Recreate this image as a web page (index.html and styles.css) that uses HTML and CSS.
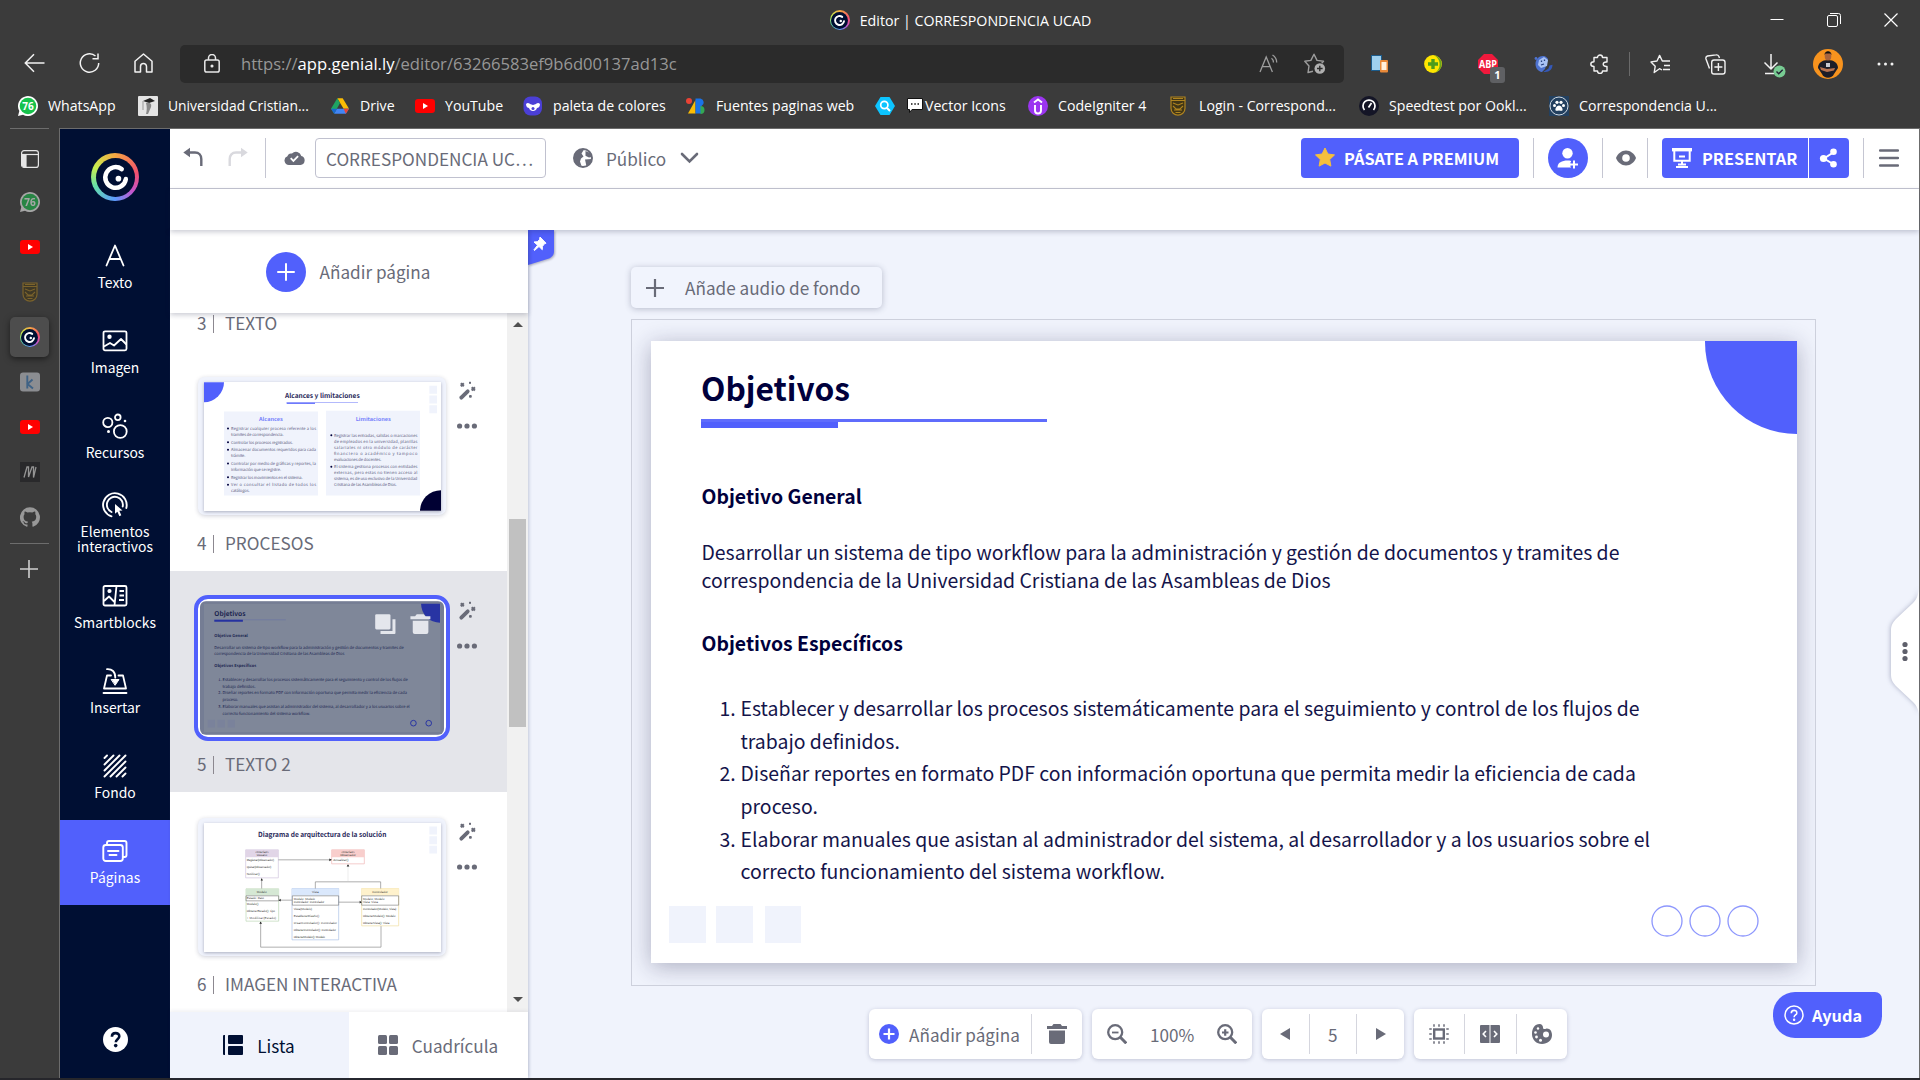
FILE: index.html
```html
<!DOCTYPE html>
<html lang="es">
<head>
<meta charset="utf-8">
<title>Editor | CORRESPONDENCIA UCAD</title>
<link rel="stylesheet" href="styles.css">
</head>
<body>
<svg class="defs" width="0" height="0" aria-hidden="true">
  <defs>
    <symbol id="i-wa" viewBox="0 0 20 20"><path d="M0 20l1.300-5A10 10 0 1 1 5 18.700z" fill="#fff"/><circle cx="10" cy="10" r="8.300" fill="#17c24c"/><text x="10" y="13.600" font-size="10" font-weight="700" fill="#fff" text-anchor="middle" class="fu">76</text></symbol>
    <symbol id="i-yt" viewBox="0 0 20 14"><rect width="20" height="14" rx="3.200" fill="#f00"/><path d="M8 4l5 3-5 3z" fill="#fff"/></symbol>
    <symbol id="i-shield" viewBox="0 0 16 20"><path d="M1 1h14v11.300c0 4-3.300 6.900-7 6.900S1 16.300 1 12.300z" fill="#413616" stroke="#b08420" stroke-width="1.200"/><path d="M1 4.500h14M3 2.500h10M3 7l5 2 5-2M3 10l3 3h4l3-3M4 14h8M5.500 16.500h5" stroke="#b08420" stroke-width="1.100" fill="none"/></symbol>
    <symbol id="i-logo-g" viewBox="0 0 20 20"><path d="M13.200 5.700A5.300 5.300 0 1 0 15.300 10.800" fill="none" stroke="#fff" stroke-width="2.300" stroke-linecap="round"/><circle cx="11.500" cy="10.600" r="1.450" fill="#fff"/></symbol>
    <symbol id="i-wand" viewBox="0 0 20 20"><path d="M3.300 16.700l6.400-6.400" stroke="#696b78" stroke-width="3.800" stroke-linecap="round"/><path d="M2.800 2.300l3 3m0-3l-3 3M13.700 6.300l3.200 3.200m0-3.200l-3.200 3.200" stroke="#696b78" stroke-width="2"/><rect x="11" y=".8" width="2" height="2" fill="#696b78"/><rect x="11" y="14" width="2.800" height="2.800" rx="1" fill="#696b78"/></symbol>
    <symbol id="i-dots" viewBox="0 0 20 6"><g fill="#696b78"><circle cx="2.600" cy="3" r="2.600"/><circle cx="10" cy="3" r="2.600"/><circle cx="17.400" cy="3" r="2.600"/></g></symbol>
  </defs>
</svg>

<header class="titlebar">
  <div class="wtitle"><span class="glogo g20"><svg viewBox="0 0 20 20"><use href="#i-logo-g"/></svg></span><span>Editor | CORRESPONDENCIA UCAD</span></div>
  <div class="wbtns">
    <svg width="14" height="14"><path d="M.500 6.500h13" stroke="#fff"/></svg>
    <svg width="14" height="14" fill="none" stroke="#fff"><rect x=".500" y="2.500" width="10" height="11" rx="1.500"/><path d="M3 .500h8.500a2 2 0 0 1 2 2V11"/></svg>
    <svg width="14" height="14"><path d="M.500.500l13 13M13.500.500l-13 13" stroke="#fff" stroke-width="1.200"/></svg>
  </div>
</header>

<div class="navrow">
  <div class="navbtns">
    <svg width="21" height="20" fill="none" stroke="#f2f2f2" stroke-width="1.500"><path d="M20.500 10H1.500M10 1.200L1.300 10 10 18.800"/></svg>
    <svg width="21" height="20" fill="none" stroke="#f2f2f2" stroke-width="1.500"><path d="M19.700 10a9.200 9.200 0 1 1-3.200-7M19 .500v5.300h-5.500"/></svg>
    <svg width="19" height="20" fill="none" stroke="#f2f2f2" stroke-width="1.500" stroke-linejoin="round"><path d="M1 8.200L9.500 1 18 8.200V19h-5.500v-5.500a3 3 0 0 0-6 0V19H1z"/></svg>
  </div>
  <div class="urlbar">
    <svg class="lock" width="16" height="19" fill="none" stroke="#e8e8e8" stroke-width="1.500"><rect x=".8" y="6" width="14.400" height="12" rx="1.800"/><path d="M4.500 6V4a3.500 3.500 0 0 1 7 0v2"/><circle cx="8" cy="12" r=".8" fill="#fff"/></svg>
    <span class="url">https://<b>app.genial.ly</b>/editor/63266583ef9b6d00137ad13c</span>
    <svg class="aloud" width="22" height="19" fill="none" stroke="#9d9d9d" stroke-width="1.300"><path d="M1 18L7.200 3l6.200 15M3.300 12.700h8M12.500 4.200c1.300 1 2 2.600 2 4.300M13.500 1c2.600 1.600 4.200 4.400 4.200 7.500"/></svg>
    <svg width="22" height="21" fill="none" stroke="#9d9d9d" stroke-width="1.400" stroke-linejoin="round"><path d="M9 18.300L4 19.500l1-6.500L.8 8.300l6.100-.9L10 1.200l3 6.200 6.500.9-1.800 2"/><circle cx="15.800" cy="15.500" r="5.300" fill="#b0b0b0" stroke="none"/><path d="M15.800 12.700v5.600M13 15.500h5.600" stroke="#2b2b2b"/></svg>
  </div>
  <div class="exts">
    <svg width="18" height="18"><rect x=".500" y=".500" width="10" height="15" fill="#9fd0ee" stroke="#1c5c8c"/><rect x="9" y="5" width="8" height="12.500" rx="1" fill="#e98a3a"/><rect x="10.500" y="7" width="5" height="8" fill="#fff0dd"/></svg>
    <svg width="18" height="18"><circle cx="9" cy="9" r="8.900" fill="#ffe600"/><path d="M10 .300A8.900 8.900 0 0 1 11 17.700 10 10 0 0 0 10 .300z" fill="#6aa51d"/><path d="M9 4v10M4 9h10" stroke="#4c9c1c" stroke-width="3.400"/></svg>
    <div class="abp"><svg width="20" height="20"><path d="M6 0h8l6 6v8l-6 6H6l-6-6V6z" fill="#f0193c"/><text x="10" y="13.800" font-size="10" font-weight="700" fill="#fff" text-anchor="middle" textLength="18" lengthAdjust="spacingAndGlyphs" class="fu">ABP</text></svg><span class="badge">1</span></div>
    <svg width="19" height="18"><circle cx="2" cy="3.500" r="1.400" fill="#4d72cf"/><path d="M1.500 9c0-5 4-8.500 8-8 2 .2 3.500 1.500 4.500 3l-3 10-3 3C4 16.500 1.500 13 1.500 9z" fill="#4d72cf"/><path d="M5 5l5-3 4 3-1 6-6 2-3-3z" fill="#a9c2f5"/><path d="M7.500 5.500v1.500M10.500 4.500V6M7 10l3-1" stroke="#26407f" stroke-width="1.300"/><path d="M9.500 16.800c5 1 9-2 9-7l-3 .7-1 3z" fill="#3458b8"/></svg>
    <svg width="19" height="20" fill="none" stroke="#f2f2f2" stroke-width="1.400" stroke-linejoin="round"><path d="M4 3.500h3.500a2.500 2.500 0 0 1 5 0H17v4.500c-3-.300-3.800 1.200-3.800 2.300S14.500 12.800 17 12.500V17h-4.500a2.500 2.500 0 0 1-5 0H4v-4.500C1.800 12.500.8 11.400.8 10S1.800 7.700 4 7.700z"/></svg>
    <i class="vline"></i>
    <svg width="21" height="20" fill="none" stroke="#f2f2f2" stroke-width="1.400" stroke-linejoin="round"><path d="M12 16l-2.500-1.300L4.200 18.500l1-6.200L1 7.900l6-.900 2.600-5.600L12.300 7h7.700M14 11.500h6M13 15.500h7"/></svg>
    <svg width="21" height="21" fill="none" stroke="#f2f2f2" stroke-width="1.400"><rect x="6.700" y="6" width="13.300" height="14" rx="2.300"/><path d="M13.400 9v8M9.400 13h8M4.500 14.500L1 5a2.500 2.500 0 0 1 1.500-3L11 .900a2.500 2.500 0 0 1 3 2L14.500 4"/></svg>
    <svg width="24" height="24"><path d="M8 0v14M1.500 8.500L8 15l6.500-6.500M2 19.500h9" fill="none" stroke="#f2f2f2" stroke-width="1.500"/><circle cx="16.500" cy="17.500" r="6" fill="#78cc93"/><path d="M13.500 17.500l2.200 2.200 4-4" stroke="#223" stroke-width="1.400" fill="none"/></svg>
    <svg width="30" height="30"><circle cx="15" cy="15" r="15" fill="#f7931e"/><path d="M5 19c0-5 4-8 10-8s10 3 10 8l-4 6c-2 5-10 5-12 0z" fill="#1d1d27"/><ellipse cx="15" cy="7" rx="3.300" ry="4.600" fill="#a8643e"/><path d="M11.500 6c0-5 7-5 7 0l-1-1.500h-5z" fill="#111"/><path d="M7 18l7 2 8-1-1 2.500-7 1.500-6-2z" fill="#b87350"/><path d="M13 14h4v4h-4z" fill="#c9c9cf"/></svg>
    <svg width="17" height="4" fill="#f2f2f2"><circle cx="2" cy="2" r="1.500"/><circle cx="8.500" cy="2" r="1.500"/><circle cx="15" cy="2" r="1.500"/></svg>
  </div>
</div>

<nav class="bookmarks">
  <div><svg width="20" height="20"><use href="#i-wa"/></svg><span>WhatsApp</span></div>
  <div><svg width="20" height="20"><rect width="20" height="20" rx="1" fill="#e4e4e4"/><path d="M5 5l7-3 5 3-6 2z" fill="#222"/><path d="M8 7c4-1 6 1 5 4l-3 7H8c1-4 1-7 0-11z" fill="#888"/><path d="M5 5v9" stroke="#999"/></svg><span class="u2">Universidad Cristian...</span></div>
  <div class="b3"><svg width="18" height="18" viewBox="0 0 20 18"><path d="M7 .500h6L20 12h-6z" fill="#fbbc04"/><path d="M7 .500l3 5.200L3.500 17.500 0 12z" fill="#1fa463"/><path d="M3.500 17.500l3-5.500H20l-3.500 5.500z" fill="#4285f4"/><path d="M0 12h6.500l-3 5.500z" fill="#1967d2"/><path d="M14 12h6l-3.500 5.500z" fill="#ea4335"/></svg><span>Drive</span></div>
  <div><svg width="20" height="14"><use href="#i-yt"/></svg><span>YouTube</span></div>
  <div><svg width="20" height="20"><rect x=".500" y=".500" width="18.500" height="19" rx="7" fill="#4b3fd6"/><path d="M3 8c2-2 4 0 4 0l3 1 3-1s2-2 4 0c0 3-2 4-3 4-1 4-7 4-8 0-1 0-3-1-3-4z" fill="#fff"/><circle cx="10" cy="12.500" r="1.500" fill="#4b3fd6"/></svg><span class="u5">paleta de colores</span></div>
  <div><svg width="20" height="18"><path d="M2 16.500L9.500 3v13.500z" fill="#fbbc04"/><circle cx="3" cy="4" r="3" fill="#ea4335"/><path d="M9.500 1.500h5a4 4 0 0 1 1 7.500v7.500h-6z" fill="#1a73e8"/><path d="M14.500 9a4 4 0 0 1 0 8z" fill="#34a853"/></svg><span>Fuentes paginas web</span></div>
  <div><svg width="20" height="20"><path d="M5.500 1h9L20 10l-5.500 9h-9L0 10z" fill="#0cc4ff" stroke-linejoin="round"/><circle cx="9.300" cy="9" r="3.600" fill="none" stroke="#fff" stroke-width="1.700"/><path d="M12 12l3 3" stroke="#fff" stroke-width="1.900"/></svg><svg class="bubble" width="16" height="15"><path d="M.500.500h15v11H5l-2.500 3v-3h-2z" fill="#fff" stroke="#111"/><path d="M4 6h1.500M7.300 6h1.500M10.500 6H12" stroke="#111" stroke-width="1.500"/></svg><span class="u7">Vector Icons</span></div>
  <div><svg width="20" height="20"><circle cx="10" cy="10" r="10" fill="#9b35f0"/><path d="M7 9v5.500a3 3 0 0 0 6 0V9M6 6.500l4-3 4 3" fill="none" stroke="#fff" stroke-width="1.900"/></svg><span>CodeIgniter 4</span></div>
  <div class="b9"><svg width="16" height="20"><use href="#i-shield"/></svg><span>Login - Correspond...</span></div>
  <div><svg width="20" height="20"><circle cx="10" cy="10" r="10" fill="#141526"/><path d="M5.500 14a6 6 0 1 1 9 0M9.500 11.500L12.500 7" stroke="#fff" stroke-width="1.700" fill="none"/></svg><span>Speedtest por Ookl...</span></div>
  <div><svg width="20" height="20"><rect width="20" height="20" fill="#23405f"/><circle cx="10" cy="10" r="9" fill="#23405f" stroke="#cfd8e2"/><g fill="#fff"><path d="M10 9.500c2.200 0 4 3 3.500 4.700-.6 1.300-2.200.3-3.500.3s-2.900 1-3.500-.3C6 12.500 7.800 9.500 10 9.500z"/><circle cx="5.500" cy="9.500" r="1.500"/><circle cx="8" cy="6.300" r="1.600"/><circle cx="12" cy="6.300" r="1.600"/><circle cx="14.500" cy="9.500" r="1.500"/></g></svg><span>Correspondencia U...</span></div>
</nav>

<div class="main">
  <aside class="vtabs">
    <i class="hr"></i>
    <div class="vt first"><svg width="18" height="18" fill="none" stroke="#e6e6e6" stroke-width="1.200"><rect x=".600" y=".600" width="16.800" height="16.800" rx="2.500"/><path d="M1 4.500h16"/><path d="M1 4.500h4V17H3L1 15z" fill="#e6e6e6"/></svg></div>
    <div class="vt dim"><svg width="20" height="20"><use href="#i-wa"/></svg></div>
    <div class="vt"><svg width="20" height="14"><use href="#i-yt"/></svg></div>
    <div class="vt dim"><svg width="16" height="20"><use href="#i-shield"/></svg></div>
    <div class="vt on"><span class="glogo g20"><svg viewBox="0 0 20 20"><use href="#i-logo-g"/></svg></span></div>
    <div class="vt"><svg width="20" height="20"><rect y=".500" width="20" height="19" rx="3" fill="#8b8d91"/><path d="M7.300 3.500v13M12.500 7.500l-5 4.500 5.500 4.500" stroke="#3f6285" stroke-width="1.900" fill="none"/></svg></div>
    <div class="vt"><svg width="20" height="14"><use href="#i-yt"/></svg></div>
    <div class="vt"><svg width="20" height="20"><rect width="20" height="20" fill="#29292b"/><path d="M4 15.500L7 5l1.500 0v10L12 5h1.500v10.500L16 5" stroke="#949494" stroke-width="1.300" fill="none"/></svg></div>
    <div class="vt"><svg width="20" height="20"><path d="M10 .3a10 10 0 0 0-3.200 19.500c.5.100.7-.2.700-.5v-1.900c-2.800.6-3.400-1.200-3.400-1.200-.4-1.100-1.100-1.400-1.100-1.400-.9-.6.100-.6.100-.6 1 .1 1.500 1 1.500 1 .9 1.500 2.300 1.100 2.900.8.100-.6.400-1.100.6-1.300-2.200-.3-4.500-1.100-4.500-4.900 0-1.100.4-2 1-2.700-.1-.2-.4-1.300.1-2.600 0 0 .8-.3 2.700 1a9.500 9.500 0 0 1 5 0c1.900-1.300 2.700-1 2.700-1 .5 1.300.2 2.400.1 2.600.6.700 1 1.600 1 2.700 0 3.800-2.300 4.600-4.500 4.900.4.300.7.900.7 1.800v2.800c0 .3.200.6.700.5A10 10 0 0 0 10 .3z" fill="#989898"/></svg></div>
    <i class="hr h2"></i>
    <div class="vt plus"><svg width="18" height="18"><path d="M9 0v18M0 9h18" stroke="#d0d0d0" stroke-width="1.600"/></svg></div>
  </aside>

  <div class="app">
    <aside class="side">
      <div class="biglogo"><span class="glogo g48"><svg viewBox="0 0 20 20"><use href="#i-logo-g"/></svg></span></div>
      <div class="si"><svg width="26" height="26" fill="none" stroke="#fff" stroke-width="1.800" stroke-linecap="round" stroke-linejoin="round"><path d="M4.500 22.500L13 2.500l8.500 20M7.500 16h11"/></svg><span>Texto</span></div>
      <div class="si"><svg width="26" height="26" fill="none" stroke="#fff" stroke-width="1.800" stroke-linejoin="round"><rect x="1.500" y="3.300" width="23" height="19" rx="1.500"/><circle cx="7.500" cy="8.800" r="1.300" fill="#fff"/><path d="M2 18.500l6-3.500 4 2.500 7-6.500 5.500 5.500"/></svg><span>Imagen</span></div>
      <div class="si"><svg width="26" height="26" fill="none" stroke="#fff" stroke-width="1.800"><circle cx="5.800" cy="9.500" r="4.600"/><circle cx="15.800" cy="4.300" r="2.800"/><circle cx="18.300" cy="18.500" r="6.400"/><circle cx="23" cy="8" r="1.300" fill="#fff" stroke="none"/><circle cx="6.500" cy="18.500" r="1.500" fill="#fff" stroke="none"/></svg><span>Recursos</span></div>
      <div class="si two"><svg width="26" height="26" fill="none" stroke="#fff" stroke-width="1.900" stroke-linecap="round"><path d="M9.500 24.300A11.800 11.800 0 1 1 24.300 16M9.500 20A8 8 0 1 1 20.700 14.500"/><path d="M13 12l7.500 6.500-3.200.3 2 4.500-1.900.9-2-4.500-2.400 2z" fill="#fff" stroke="none"/></svg><span>Elementos<br>interactivos</span></div>
      <div class="si"><svg width="26" height="26" fill="none" stroke="#fff" stroke-width="1.800" stroke-linejoin="round"><rect x="1.500" y="3" width="23" height="19.500" rx="1.500"/><path d="M14.500 3l-2 19.500M17.500 8H22M17.500 12.500H22M17 17h5M2 18l5-4.500 6 6"/><circle cx="7.500" cy="8" r="1.200" fill="#fff"/></svg><span>Smartblocks</span></div>
      <div class="si"><svg width="26" height="26" fill="none" stroke="#fff" stroke-width="1.800" stroke-linecap="round" stroke-linejoin="round"><path d="M1.500 25h23M2 20.500L5 7.500h4M16.500 7.500H21l3 13H2M5 1.200c5-.3 8.300 2.300 8.300 8.500"/><path d="M9.500 11.500h7.500L13.300 17z" fill="#fff" stroke-width="1"/></svg><span>Insertar</span></div>
      <div class="si"><svg width="26" height="26" fill="none" stroke="#fff" stroke-width="1.900" stroke-linecap="round"><path d="M2.500 5l2.500-2.500M2.500 11.500l9-9M2.500 17.500L17.500 2.500M2.500 23.500l21-21M8.500 23.500l15-15M14.500 23.500l9-9M20.500 23.500l3-3"/></svg><span>Fondo</span></div>
      <div class="si on"><svg width="26" height="26" fill="none" stroke="#fff" stroke-width="1.900" stroke-linecap="round" stroke-linejoin="round"><rect x="1.300" y="7" width="19.500" height="16" rx="2.500"/><path d="M5 6.500V5a2 2 0 0 1 2-2h15.500a2 2 0 0 1 2 2v12a2 2 0 0 1-2 2H21M6 13h10.500M7.500 17h7"/></svg><span>Páginas</span></div>
      <div class="help"><svg width="25" height="25"><circle cx="12.500" cy="12.500" r="12.500" fill="#fff"/><path d="M8.900 9.700c0-4.700 7.400-4.700 7.400-.4 0 3-3.500 3-3.500 6" fill="none" stroke="#000f33" stroke-width="2.600"/><circle cx="12.700" cy="18.600" r="1.800" fill="#000f33"/></svg></div>
    </aside>

    <div class="work">
      <header class="topbar">
        <svg class="undo" width="20" height="20" fill="none" stroke="#696b78" stroke-width="2.400"><path d="M3.500 5.500h8.500c4 0 6.300 2.800 6.300 6.500v7"/><path d="M.300 5.500L7 .700v9.600z" fill="#696b78" stroke="none"/></svg>
        <svg class="redo" width="20" height="20" fill="none" stroke="#d9d9de" stroke-width="2.400"><path d="M16.500 5.500H8c-4 0-6.300 2.800-6.300 6.500v7"/><path d="M19.700 5.500L13 .700v9.600z" fill="#d9d9de" stroke="none"/></svg>
        <i class="sep s1"></i>
        <svg class="cloud" width="21" height="14"><path d="M5 14a4.500 4.500 0 0 1-1.600-8.700A4 4 0 0 1 8 2.500 5.500 5.500 0 0 1 17.300 5 4.600 4.600 0 0 1 16.500 14z" fill="#696b78"/><path d="M6.700 7.200l2.700 2.700 4.700-4.700" fill="none" stroke="#fff" stroke-width="1.800"/></svg>
        <div class="docname">CORRESPONDENCIA UC…</div>
        <svg class="globe" width="20" height="20"><circle cx="10" cy="10" r="9" fill="#fff" stroke="#696b78" stroke-width="2"/><path d="M2 6C4 2 8 .500 11 1.500L8.500 5.500l2 3-2.500 2-1 3 1.500 4.500C4 18 1 14 1.500 9zM12.500 3l5 2 1 4-2.500.500-3.500-1.800zM12 11.500l6.500-.5c0 4-2.500 6.500-5 7.500z" fill="#696b78"/></svg>
        <span class="pub">Público</span>
        <svg width="19" height="12"><path d="M2 2l7.500 7.500L17 2" fill="none" stroke="#696b78" stroke-width="2.600" stroke-linecap="round"/></svg>
        <div class="tright">
          <div class="premium"><svg width="20" height="19"><path d="M10 0l2.900 6 6.600.9-4.800 4.600 1.200 6.600L10 15l-5.900 3.100 1.200-6.600L.500 6.900 7.100 6z" fill="#f5bf3c" stroke="#f5bf3c" stroke-linejoin="round"/></svg><span>PÁSATE A PREMIUM</span></div>
          <i class="sep s2"></i>
          <div class="user"><svg width="40" height="40" fill="#fff"><ellipse cx="19.500" cy="15.300" rx="5.200" ry="5.300"/><path d="M9.500 29.500c0-5 4.500-7 10-7 1.500 0 2.500.1 3.500.5v6.500z"/><path d="M26 23v7M22.500 26.500h7" stroke="#5160fc" stroke-width="5"/><path d="M26 22.500v8M22 26.500h8" stroke="#fff" stroke-width="2"/></svg></div>
          <i class="sep s3"></i>
          <svg width="20" height="16"><path d="M10 .500c4.500 0 8.500 3.200 10 7.500-1.500 4.300-5.500 7.500-10 7.500S1.500 12.300 0 8C1.500 3.700 5.500.500 10 .500z" fill="#696b78"/><circle cx="10" cy="8" r="3.800" fill="#fff"/></svg>
          <i class="sep s4"></i>
          <div class="present"><svg width="20" height="20" fill="none" stroke="#fff" stroke-width="2"><path d="M0 1.700h20" stroke-width="3.400"/><path d="M2.300 3v9.800h15.400V3M10 13v4M4 19h12M6 16.500h8M7 8.500h6"/></svg><span>PRESENTAR</span></div>
          <div class="share"><svg width="20" height="20"><path d="M15 4L5 10.500 14 16" fill="none" stroke="#fff" stroke-width="2"/><g fill="#fff"><circle cx="14.500" cy="3.700" r="3.300"/><circle cx="4.500" cy="10.500" r="3.600"/><circle cx="14.500" cy="16.200" r="3.300"/></g></svg></div>
          <i class="sep s5"></i>
          <svg width="20" height="18"><path d="M1 1.500h18M1 9h18M1 16.500h18" stroke="#696b78" stroke-width="2.400" stroke-linecap="round"/></svg>
        </div>
      </header>
      <div class="subbar"></div>

      <div class="body">
        <section class="pages">
          <div class="addpage"><span class="pc"><svg width="18" height="18"><path d="M9 1v16M1 9h16" stroke="#fff" stroke-width="2" stroke-linecap="round"/></svg></span><span>Añadir página</span></div>
          <div class="listwrap">
            <div class="list">
              <div class="row r3"><div class="lbl"><span>3</span><i></i><span>TEXTO</span></div></div>

              <div class="row">
                <div class="thumb"><svg class="slidethumb" viewBox="102 487 711 386">
                  <path d="M102 487h60a60 60 0 0 1-60 60z" fill="#5160fc"/><path d="M813 811v62h-63a63 62 0 0 1 63-62z" fill="#000033"/>
                  <g fill="#f0f3fc"><path d="M778 498h23v24h-23zM778 527h23v24h-23zM778 556h23v24h-23zM162 575h282v252H162zM468 573h282v254H468z"/></g>
                  <text x="345" y="533" class="tt" font-size="20" textLength="224" lengthAdjust="spacingAndGlyphs">Alcances y limitaciones</text>
                  <path d="M350 550h85" stroke="#5160fc" stroke-width="4"/><path d="M350 548h214" stroke="#8d96fb" stroke-width="2"/>
                  <text x="267" y="603" class="tb" font-size="16" textLength="71" lengthAdjust="spacingAndGlyphs">Alcances</text>
                  <text x="557" y="603" class="tb" font-size="16" textLength="105" lengthAdjust="spacingAndGlyphs">Limitaciones</text>
                  <g class="tx" font-size="12">
                    <text x="183" y="630" textLength="255">Registrar cualquier proceso referente a los</text><text x="183" y="648" textLength="158">tramites de correspondencia.</text>
                    <text x="183" y="672" textLength="186">Controlar los procesos registrados.</text>
                    <text x="183" y="693" textLength="255">Almacenar documentos requeridos para cada</text><text x="183" y="711" textLength="43">trámite.</text>
                    <text x="183" y="735" textLength="255">Controlar por medio de gráficas y reportes, la</text><text x="183" y="753" textLength="150">información que se registre.</text>
                    <text x="183" y="777" textLength="215">Registrar los movimientos en el sistema.</text>
                    <text x="183" y="798" textLength="255">Ver o consultar el listado de todos los</text><text x="183" y="816" textLength="56">catálogos.</text>
                    <text x="492" y="651" textLength="250">Registrar las entradas, salidas o marcaciones</text><text x="492" y="669" textLength="250">de empleados en la universidad, planillas</text><text x="492" y="687" textLength="250">salariales ni otro módulo de carácter</text><text x="492" y="705" textLength="250">financiero o académico y tampoco</text><text x="492" y="723" textLength="142">evaluaciones de docentes.</text>
                    <text x="492" y="745" textLength="250">El sistema gestiona procesos con entidades</text><text x="492" y="762" textLength="250">externas, pero estas no tienen acceso al</text><text x="492" y="780" textLength="250">sistema, es de uso exclusivo de la Universidad</text><text x="492" y="798" textLength="188">Cristiana de las Asambleas de Dios.</text>
                  </g>
                  <g fill="#00003c"><circle cx="174" cy="626" r="3"/><circle cx="174" cy="667" r="3"/><circle cx="174" cy="690" r="3"/><circle cx="174" cy="731" r="3"/><circle cx="174" cy="772" r="3"/><circle cx="174" cy="795" r="3"/><circle cx="484" cy="646" r="3"/><circle cx="484" cy="741" r="3"/></g>
                </svg></div>
                <div class="acts"><svg width="20" height="20"><use href="#i-wand"/></svg><svg width="20" height="6"><use href="#i-dots"/></svg></div>
                <div class="lbl"><span>4</span><i></i><span>PROCESOS</span></div>
              </div>

              <div class="row sel">
                <div class="thumb"><svg class="selthumb" viewBox="90 123 734 402">
                  <rect x="90" y="123" width="734" height="402" fill="#757d94"/><rect x="102" y="131" width="711" height="386" fill="#7f8799"/>
                  <path d="M755 131h57v57a57 57 0 0 1-57-57z" fill="#2834a3"/>
                  <g fill="#7a829b"><path d="M113 480h22v23h-22zM143 480h22v23h-22zM173 480h22v23h-22z"/></g>
                  <path d="M133 179h215" stroke="#6370a8" stroke-width="1.500"/><path d="M133 182h86" stroke="#2632a0" stroke-width="6"/>
                  <g fill="none" stroke="#2834a3" stroke-width="3"><circle cx="732" cy="490" r="8.500"/><circle cx="778" cy="490" r="8.500"/></g>
                  <g class="td">
                    <text x="133" y="168" font-size="20" font-weight="700" textLength="94">Objetivos</text>
                    <g font-size="12"><text x="133" y="231" font-weight="700" textLength="101">Objetivo General</text>
                    <text x="133" y="267" textLength="570">Desarrollar un sistema de tipo workflow para la administración y gestión de documentos y tramites de</text>
                    <text x="133" y="285" textLength="391">correspondencia de la Universidad Cristiana de las Asambleas de Dios</text>
                    <text x="133" y="321" font-weight="700" textLength="126">Objetivos Específicos</text>
                    <text x="145" y="363">1.</text><text x="158" y="363" textLength="557">Establecer y desarrollar los procesos sistemáticamente para el seguimiento y control de los flujos de</text>
                    <text x="158" y="384" textLength="99">trabajo definidos.</text>
                    <text x="145" y="402">2.</text><text x="158" y="402" textLength="555">Diseñar reportes en formato PDF con información oportuna que permita medir la eficiencia de cada</text>
                    <text x="158" y="423" textLength="47">proceso.</text>
                    <text x="145" y="444">3.</text><text x="158" y="444" textLength="563">Elaborar manuales que asistan al administrador del sistema, al desarrollador y a los usuarios sobre el</text>
                    <text x="158" y="465" textLength="263">correcto funcionamiento del sistema workflow.</text></g>
                  </g>
                  <g fill="#e4e6ec"><rect x="617" y="162" width="46" height="46" rx="4"/><path d="M669 177h9v42a3 3 0 0 1-3 3h-42v-9h36z"/><path d="M723 168h14l5-6h21l5 6h15v9h-60zM730 182h47v34a6 6 0 0 1-6 6h-35a6 6 0 0 1-6-6z"/></g>
                </svg></div>
                <div class="acts"><svg width="20" height="20"><use href="#i-wand"/></svg><svg width="20" height="6"><use href="#i-dots"/></svg></div>
                <div class="lbl"><span>5</span><i></i><span>TEXTO 2</span></div>
              </div>

              <div class="row">
                <div class="thumb"><svg class="slidethumb" viewBox="102 71 711 386">
                  <g fill="#f0f3fc"><path d="M778 81h23v24h-23zM778 110h23v24h-23zM778 139h23v23h-23z"/></g>
                  <text x="264" y="113" class="tt" font-size="21" textLength="385" lengthAdjust="spacingAndGlyphs">Diagrama de arquitectura de la solución</text>
                  <g fill="#fff" stroke-width="2"><path d="M227 151h98v84h-98z" stroke="#cfc3dc"/><path d="M485 151h98v42h-98z" stroke="#f0b3b3"/><path d="M228 268h98v97h-98z" stroke="#b9d6b4"/><path d="M366 267h140v154H366z" stroke="#a9c0e6"/><path d="M575 267h111v112H575z" stroke="#f0dc9c"/></g>
                  <path d="M227 151h98v22h-98z" fill="#e1d5e7"/><path d="M485 151h98v22h-98z" fill="#f8cecc"/><path d="M228 268h98v20h-98z" fill="#d5e8d4"/><path d="M366 267h140v21H366z" fill="#dae8fc"/><path d="M575 267h111v21H575z" fill="#fff2cc"/>
                  <g fill="none"><path d="M228 289h98v15h-98zM367 289h139v28H367zM575 289h111v28H575zM325 181h160M275 267v-30M436 267v-20h196v20" stroke="#777" stroke-width="1.800"/><path d="M534 247v-50" stroke="#ccc"/><path d="M366 302h-38M506 308h68M633 380v63H272v-74" stroke="#888" stroke-width="2"/></g>
                  <path d="M485 181l-7-4v8zM275 236l-3 7h7zM534 194l-4 7h8zM326 302l6-4v8zM575 308l-6-4v8zM272 366l-4 7h8z" fill="#222"/>
                  <g class="tg" font-size="9"><g text-anchor="middle"><text x="276" y="160">&lt;Interfaz&gt;</text><text x="276" y="170">Usuario</text><text x="534" y="160">&lt;Interfaz&gt;</text><text x="534" y="170">Observador</text><text x="275" y="281">Modelo</text><text x="436" y="281">Vista</text><text x="630" y="281">Controlador</text></g>
                  <text x="230" y="185" textLength="82">Registrar(Observador)</text><text x="230" y="206" textLength="74">Quitar(Observador)</text><text x="230" y="227">Notificar()</text><text x="490" y="185">Actualizar()</text><text x="230" y="299">Estado: Dato</text><text x="230" y="316">Modelo()</text><text x="230" y="338" textLength="85">ObtenerEstado(): tipo</text><text x="230" y="358" textLength="88">+ Modificar(Estado)</text>
                  <text x="371" y="301">Modelo: Modelo</text><text x="371" y="311" textLength="92">Controlador: Controlador</text><text x="371" y="331">Vista(Modelo)</text><text x="371" y="352">EstablecerDiseño()</text><text x="371" y="372" textLength="130">CrearControlador(): Controlador</text><text x="371" y="394" textLength="127">ObtenerControlador(): Controlador</text><text x="371" y="414" textLength="94">ObtenerModelo(): Modelo</text>
                  <text x="579" y="301">Modelo: Modelo</text><text x="579" y="311">Vista: Vista</text><text x="579" y="331" textLength="100">Controlador(Modelo, Vista)</text><text x="579" y="352" textLength="97">ObtenerModelo(): Modelo</text><text x="579" y="372" textLength="79">ObtenerVista(): Vista</text></g>
                </svg></div>
                <div class="acts"><svg width="20" height="20"><use href="#i-wand"/></svg><svg width="20" height="6"><use href="#i-dots"/></svg></div>
                <div class="lbl"><span>6</span><i></i><span>IMAGEN INTERACTIVA</span></div>
              </div>
            </div>
            <div class="scroll"><svg width="10" height="5"><path d="M5 0l5 5H0z" fill="#505050"/></svg><div class="thumbbar"></div><svg width="10" height="5"><path d="M0 0h10L5 5z" fill="#505050"/></svg></div>
          </div>
          <div class="tabs">
            <div class="tab on"><svg width="20" height="20" fill="#000f33"><path d="M1 0h1v20H1a1 1 0 0 1-1-1V1a1 1 0 0 1 1-1z"/><rect x="5" width="15" height="9" rx="1"/><rect x="5" y="11" width="15" height="9" rx="1"/></svg><span>Lista</span></div>
            <div class="tab"><svg width="20" height="20" fill="#696b78"><rect width="9" height="9" rx="1.500"/><rect x="11" width="9" height="9" rx="1.500"/><rect y="11" width="9" height="9" rx="1.500"/><rect x="11" y="11" width="9" height="9" rx="1.500"/></svg><span>Cuadrícula</span></div>
          </div>
        </section>

        <section class="canvas">
          <svg class="pin" width="30" height="38"><path d="M0 0h26v21c0 4-2 6-5 7.500L0 35z" fill="#5160fc"/><path d="M12.500 7.500l6 6.200-1.600.6-2 2.700-.1 3.200-3.300-3.200-4.500 4-.6-.6 3.700-4.700L6.500 12.500l3.300-.3 2.300-2z" transform="translate(-.5 -.5)" fill="#fff" stroke="#fff"/></svg>
          <div class="audio"><svg width="18" height="18"><path d="M9 0v18M0 9h18" stroke="#696b78" stroke-width="2.200"/></svg><span>Añade audio de fondo</span></div>
          <div class="frame">
            <article class="slide">
              <div class="corner"></div>
              <h1>Objetivos</h1>
              <div class="rule"><i></i></div>
              <h2>Objetivo General</h2>
              <p>Desarrollar un sistema de tipo workflow para la administración y gestión de documentos y tramites de<br>correspondencia de la Universidad Cristiana de las Asambleas de Dios</p>
              <h2 class="second">Objetivos Específicos</h2>
              <ol>
                <li class="li1"><span>1.</span><div>Establecer y desarrollar los procesos sistemáticamente para el seguimiento y control de los flujos de<br>trabajo definidos.</div></li>
                <li><span>2.</span><div>Diseñar reportes en formato PDF con información oportuna que permita medir la eficiencia de cada<br>proceso.</div></li>
                <li><span>3.</span><div>Elaborar manuales que asistan al administrador del sistema, al desarrollador y a los usuarios sobre el<br>correcto funcionamiento del sistema workflow.</div></li>
              </ol>
              <div class="deco"><i></i><i></i><i class="d3"></i><svg width="108" height="32" fill="none" stroke="#8d97fd" stroke-width="1.300"><circle cx="16" cy="16" r="15"/><circle cx="54" cy="16" r="15"/><circle cx="92" cy="16" r="15"/></svg></div>
            </article>
          </div>
          <div class="tools">
            <div class="tool t1"><svg width="20" height="20"><circle cx="10" cy="10" r="10" fill="#5160fc"/><path d="M10 4.500v11M4.500 10h11" stroke="#fff" stroke-width="2.200"/></svg><span>Añadir página</span><i class="tsep"></i><svg class="trash" width="20" height="20" fill="#696b78"><path d="M0 2h5l1.500-2h7L15 2h5v3H0zM2 6.500h16V18a2 2 0 0 1-2 2H4a2 2 0 0 1-2-2z"/></svg></div>
            <div class="tool t2"><svg width="20" height="20" fill="none" stroke="#696b78" stroke-width="2.300"><circle cx="8.200" cy="8.200" r="7"/><path d="M13.300 13.300l6 6" stroke-width="3"/><path d="M5 8.500h6.500" stroke-width="1.800"/></svg><span>100%</span><svg width="20" height="20" fill="none" stroke="#696b78" stroke-width="2.300"><circle cx="8.200" cy="8.200" r="7"/><path d="M13.300 13.300l6 6" stroke-width="3"/><path d="M5 8.500h6.500M8.200 5.200v6.500" stroke-width="2.200"/></svg></div>
            <div class="tool t3"><svg width="10" height="14"><path d="M10 1v12L0 7z" fill="#696b78"/></svg><i class="tsep"></i><span>5</span><i class="tsep"></i><svg width="10" height="14"><path d="M0 1v12l10-6z" fill="#696b78"/></svg></div>
            <div class="tool t4"><svg width="20" height="20" fill="none" stroke="#696b78" stroke-width="2"><rect x="5.200" y="5.500" width="9.600" height="9" stroke-width="2.400"/><path d="M1 5h1M18 5h1M1 10h1M18 10h1M1 15h1M18 15h1M5 1v1M10 1v1M15 1v1M5 18v1M10 18v1M15 18v1" stroke-linecap="square" stroke-width="1.500"/></svg><i class="tsep"></i><svg width="20" height="18"><path d="M1 0h8.500v18H1a1 1 0 0 1-1-1V1a1 1 0 0 1 1-1zM10.500 0H19a1 1 0 0 1 1 1v16a1 1 0 0 1-1 1h-8.500z" fill="#696b78"/><path d="M6 6L3.200 9 6 12M14 6l2.800 3L14 12" fill="none" stroke="#fff" stroke-width="1.600"/></svg><i class="tsep"></i><svg width="20" height="20"><path d="M7.500 0C10 0 11 2 11 3.500c0 2 2 1.500 3 1.200 3.500-.7 6 2.300 6 6.300 0 5.500-4.500 9-10 9S0 16 0 10 3 0 7.500 0z" fill="#696b78"/><g fill="#fff"><circle cx="14" cy="10.500" r="3"/><circle cx="6" cy="4.500" r="1.200"/><circle cx="3.500" cy="8.500" r="1.300"/><circle cx="4.500" cy="13" r="1.400"/><circle cx="8.500" cy="16.300" r="1.500"/></g></svg></div>
          </div>
          <div class="ayuda"><svg width="20" height="20" fill="none" stroke="#fff" stroke-width="1.500"><circle cx="10" cy="10" r="9"/><path d="M7.300 8.200c0-3.700 5.500-3.700 5.500-.3 0 2.200-2.700 2-2.700 4.400" stroke-width="1.600"/><circle cx="10.100" cy="14.700" r=".5" fill="#fff"/></svg><span>Ayuda</span></div>
          <svg class="handle" width="34" height="140"><path d="M34 13c-1 8-2 11-6 15L12 43c-5 5-6 8-6 13v43c0 5 1 8 6 13l16 15c4 4 5 7 6 12z" fill="#fff"/><g fill="#5f606b"><circle cx="20" cy="69.500" r="2.600"/><circle cx="20" cy="76.500" r="2.600"/><circle cx="20" cy="83.500" r="2.600"/></g></svg>
        </section>
      </div>
    </div>
  </div>
</div>
</body>
</html>
```

FILE: styles.css
```css
* { box-sizing: border-box; margin: 0; padding: 0; }
svg { display: block; flex: none; }
i { display: block; flex: none; }
body { width: 1920px; height: 1080px; overflow: hidden; background: #3b3b3b; display: flex; flex-direction: column; font-family: "Noto Sans CJK JP", "Open Sans", sans-serif; white-space: nowrap; }
.defs { position: absolute; }
.fu { font-family: "Open Sans", sans-serif; }

/* browser window chrome */
.titlebar, .navrow, .bookmarks { font-family: "Open Sans", sans-serif; color: #fff; flex: none; }
.titlebar { height: 45px; position: relative; display: flex; justify-content: center; }
.wtitle { height: 40px; display: flex; align-items: center; gap: 10px; font-size: 14.22px; padding-left: 1px; }
.wbtns { position: absolute; right: 22px; top: 13px; display: flex; gap: 43px; }
.glogo { display: flex; align-items: center; justify-content: center; flex: none; border-radius: 50%; background: conic-gradient(from 0deg, #f5a742, #f2506e 22%, #c455cc 36%, #5d9bff 50%, #64e0a8 68%, #c8ef50 82%, #f5a742); }
.glogo svg { background: #000f33; border-radius: 50%; }
.g20 { width: 20px; height: 20px; }
.g20 svg { width: 17px; height: 17px; }
.g48 { width: 48px; height: 48px; }
.g48 svg { width: 39px; height: 39px; }

.navrow { height: 38px; display: flex; align-items: center; }
.navbtns { width: 180px; padding: 0 0 2px 24px; display: flex; gap: 34px; align-items: center; }
.urlbar { width: 1164px; height: 38px; border-radius: 5px; background: #2b2b2b; display: flex; align-items: center; padding: 0 18px 2px 24px; }
.url { margin-left: 21px; font-size: 16.6px; color: #979797; flex: 1; }
.url b { font-weight: 400; color: #fff; }
.aloud { margin-right: 23px; }
.exts { display: flex; align-items: center; padding-left: 27px; }
.exts > :nth-child(2) { margin-left: 35px; }
.exts > :nth-child(3) { margin-left: 36px; }
.exts > :nth-child(4) { margin-left: 36px; }
.exts > :nth-child(5) { margin-left: 37px; }
.vline { width: 1px; height: 24px; background: #6a6a6a; margin: 0 20px; }
.exts > :nth-child(8) { margin-left: 34px; }
.exts > :nth-child(9) { margin: 4px 0 0 37px; }
.exts > :nth-child(10) { margin-left: 26px; }
.exts > :nth-child(11) { margin-left: 34px; }
.abp { position: relative; }
.badge { position: absolute; left: 12px; top: 13px; width: 15px; height: 16px; border-radius: 3px; background: #5f6063; font-size: 11px; line-height: 16px; text-align: center; font-weight: 700; }

.bookmarks { height: 45px; padding-left: 18px; display: grid; grid-template-columns: 120px 193px 84px 108px 163px 189px 153px 142px 189px 190px 200px; align-items: center; font-size: 14.15px; }
.bookmarks div { display: flex; align-items: center; gap: 10px; }
.bookmarks .b3 { gap: 11px; }
.bookmarks .b9 { gap: 13px; }
.bookmarks .u2 { font-size: 13.87px; }
.bookmarks .bubble { margin: 0 -8px 0 2px; }

/* vertical browser tabs */
.main { flex: 1; display: flex; min-height: 0; border-bottom: 2px solid #26262b; }
.vtabs { width: 59px; padding: 0 10px; }
.hr { height: 1px; background: #6d6d6d; }
.vt { width: 39px; height: 40px; margin-bottom: 5px; border-radius: 5px; display: flex; align-items: center; justify-content: center; }
.vt.first { margin: 10px 0 3px; }
.vt.on { background: #4d4d4d; box-shadow: 0 2px 6px rgba(0, 0, 0, .5); }
.vt.dim svg { opacity: .55; }
.h2 { margin-top: 6px; }
.vt.plus { margin: 5px 0 0 -1px; }

.app { flex: 1; display: flex; border: 1px solid #6c6c6c; border-width: 1px 1px 0 1px; min-width: 0; }

/* editor tool sidebar */
.side { width: 110px; background: #000f33; display: flex; flex-direction: column; align-items: center; position: relative; }
.biglogo { height: 96px; padding-top: 24px; }
.si { width: 110px; height: 85px; display: flex; flex-direction: column; align-items: center; padding-top: 18px; color: #fff; font-size: 13.9px; line-height: 15px; text-align: center; }
.si span { margin-top: 6px; }
.si.two { padding-top: 12px; }
.si.on { background: #5160fc; }
.help { margin: auto 0 26px; }

.work { flex: 1; display: flex; flex-direction: column; min-width: 0; background: #fff; }
.topbar { height: 60px; border-bottom: 1px solid #c5c6d2; display: flex; align-items: center; padding: 0 20px 2px 13px; color: #696b78; font-size: 17.15px; flex: none; }
.redo { margin-left: 25px; }
.undo, .redo { margin-top: -2px; }
.sep { width: 1px; height: 40px; background: #c5c6d2; }
.s1 { margin: 0 18px 0 17px; }
.docname { width: 231px; height: 40px; border: 1px solid #c0c1cf; border-radius: 4px; margin: 0 27px 0 10px; line-height: 39px; padding-left: 10px; }
.pub { margin: 1px 14px 0 13px; width: 60px; }
.tright { margin-left: auto; display: flex; align-items: center; color: #fff; font-weight: 700; font-size: 16.3px; }
.premium { width: 218px; height: 40px; background: #5160fc; border-radius: 4px; display: flex; align-items: center; padding-left: 14px; gap: 9px; }
.premium span, .present span { margin-top: 1px; }
.s2 { margin: 0 14px; }
.user { width: 40px; height: 40px; border-radius: 50%; background: #5160fc; }
.s3 { margin: 0 13px 0 14px; }
.s4 { margin: 0 14px 0 11px; }
.present { width: 146px; height: 40px; background: #5160fc; border-radius: 4px 0 0 4px; display: flex; align-items: center; padding-left: 10px; gap: 10px; }
.share { width: 40px; height: 40px; margin-left: 1px; background: #5160fc; border-radius: 0 4px 4px 0; display: flex; align-items: center; justify-content: center; }
.s5 { margin: 0 15px 0 14px; }
.subbar { height: 41px; flex: none; background: #fff; box-shadow: 0 2px 5px rgba(20, 25, 60, .22); position: relative; z-index: 3; }
.body { flex: 1; display: flex; min-height: 0; }

/* page list */
.pages { width: 358px; display: flex; flex-direction: column; background: #fff; color: #696b78; font-size: 17.15px; box-shadow: 1px 0 3px rgba(60, 70, 120, .25); z-index: 1; }
.addpage { height: 83px; display: flex; align-items: center; justify-content: center; gap: 14px; padding-right: 2px; flex: none; box-shadow: 0 2px 5px rgba(20, 25, 60, .22); z-index: 2; }
.pc { width: 40px; height: 40px; border-radius: 50%; background: #5160fc; display: flex; align-items: center; justify-content: center; }
.listwrap { flex: 1; display: flex; min-height: 0; overflow: hidden; }
.list { width: 337px; }
.row { height: 220.5px; display: grid; grid-template-columns: 248px 1fr; grid-template-rows: 167px 1fr; padding-left: 28px; column-gap: 12px; }
.row.r3 { height: 37.5px; grid-template-rows: 0 1fr; }
.row.r3 .lbl { margin-top: -4px; }
.row.sel { background: #e4e5ea; }
.thumb { margin-top: 26.5px; width: 248px; height: 138px; border-radius: 7px; background: #f0f3fc; box-shadow: 0 1px 4px rgba(40, 45, 80, .22); padding: 5px 0 0 6px; }
.thumb text { text-rendering: geometricPrecision; }
.slidethumb { width: 237px; height: 129px; background: #fff; box-shadow: 0 1px 3px rgba(40, 45, 80, .35); }
.sel .thumb { margin: 24px -4px 0; width: 256px; height: 146px; padding: 2px; border: 4px solid #5160fc; border-radius: 14px; background: #fff; box-shadow: none; }
.selthumb { width: 244px; height: 134px; border-radius: 6px; }
.tt { font-weight: 700; fill: #2b2b5c; }
.tb { font-weight: 700; fill: #7681fb; }
.tx { fill: #5a5a80; }
.td { fill: #1c2550; }
.tg { fill: #333; font-family: "Liberation Sans", sans-serif; }
.acts { display: flex; flex-direction: column; align-items: flex-start; gap: 22px; padding-top: 30px; }
.acts svg:last-child { margin-left: -1px; }
.lbl { grid-column: 1 / 3; display: flex; align-items: center; height: 26px; margin-top: 12px; }
.lbl span:first-child { width: 14px; margin-left: -1px; }
.lbl i { width: 1px; height: 18px; background: #8c8890; margin: 3px 11px 0 2px; }
.scroll { width: 21px; background: #f1f1f1; display: flex; flex-direction: column; align-items: center; padding: 9px 0 10px; }
.thumbbar { width: 17px; height: 208px; background: #c1c1c1; margin: 192px 0 auto; }
.tabs { height: 66px; display: flex; flex: none; box-shadow: 0 -1px 4px rgba(20, 25, 60, .08); }
.tab { width: 179px; display: flex; align-items: center; justify-content: center; gap: 14px; padding-right: 1px; }
.tab.on { background: #f0f3fc; color: #000f33; }

/* canvas */
.canvas { flex: 1; background: #f0f3fc; position: relative; padding: 37px 0 0 103px; font-size: 17.15px; color: #696b78; min-width: 0; }
.pin { position: absolute; left: 0; top: 0; filter: drop-shadow(1px 1px 1px rgba(60, 60, 100, .4)); }
.audio { width: 251px; height: 41px; border-radius: 5px; background: #f1f4fd; box-shadow: 0 1px 6px rgba(50, 55, 90, .3); display: flex; align-items: center; gap: 21px; padding-left: 15px; }
.frame { margin-top: 11px; width: 1185px; height: 667px; border: 1px solid #cdd0dc; padding: 21px 0 0 19px; overflow: hidden; }
.slide { width: 1146px; height: 622px; background: #fff; box-shadow: 0 4px 22px rgba(30, 32, 70, .32); position: relative; padding: 26px 0 0 50px; color: #14144a; font-size: 19.43px; }
.corner { position: absolute; right: 0; top: 0; width: 92.5px; height: 93px; background: #5160fc; border-bottom-left-radius: 93px; }
.slide h1 { font-size: 31.7px; line-height: 40px; color: #00003c; }
.rule { height: 9px; width: 346px; margin-top: 12px; border-top: 3px solid #5f6cfc; }
.rule i { height: 6px; width: 137px; background: #5160fc; }
.slide h2 { font-size: 19.4px; line-height: 28px; margin: 54px 0 28px; color: #00003c; }
.slide h2, .slide p, .slide ol { padding-left: .5px; }
.slide p { line-height: 28px; }
.slide h2.second { margin: 35px 0 33.6px; }
.slide ol { list-style: none; line-height: 32.6px; }
.slide .li1 { line-height: 33.4px; }
.slide li { display: flex; padding-left: 18px; }
.slide li span { width: 21px; }
.deco { position: absolute; left: 18px; right: 38.5px; top: 565px; height: 37px; display: flex; align-items: center; }
.deco i { width: 37px; height: 37px; background: #f0f3fc; margin-right: 10px; }
.deco .d3 { width: 36px; margin-left: 2px; }
.deco svg { margin: -7px 0 0 auto; }

.tools { display: flex; gap: 10.3px; margin: 23px 0 0 238px; }
.tool { height: 50px; background: #fff; border-radius: 6px; box-shadow: 0 1px 4px rgba(50, 55, 100, .25); display: flex; align-items: center; }
.tsep { width: 1px; height: 40px; background: #d5d6de; }
.t1 { width: 213px; padding-left: 10px; }
.t1 span { margin: 0 10px; width: 112px; }
.trash { margin-left: 15px; }
.t2 { width: 159.5px; justify-content: space-between; padding: 0 15px; }
.t3 { width: 141.5px; justify-content: space-between; padding: 0 18px; }
.t4 { width: 153px; justify-content: space-between; padding: 0 15px; }
.ayuda { position: absolute; right: 37px; bottom: 40px; width: 109px; height: 46px; border-radius: 22px 7px 22px 22px; background: #5160fc; color: #fff; font-weight: 700; font-size: 16.3px; display: flex; align-items: center; gap: 8px; padding: 0 0 1px 11px; }
.handle { position: absolute; right: 0; top: 345px; filter: drop-shadow(-1px 0 2px rgba(60, 65, 110, .3)); }
```
